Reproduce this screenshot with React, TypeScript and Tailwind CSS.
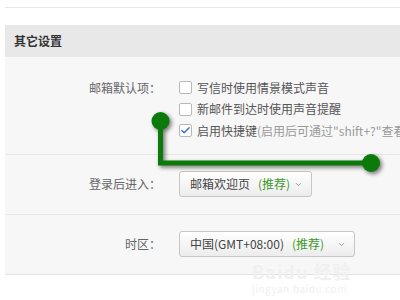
import { ChevronDown, Check } from "lucide-react"

const font = { fontFamily: '"Noto Sans CJK SC", "Noto Sans", sans-serif' }

function Box({ checked }: { checked?: boolean }) {
  return (
    <span className="flex h-[13px] w-[13px] shrink-0 items-center justify-center rounded-[2px] border border-[#b8b8b8] bg-white">
      {checked ? <Check className="h-[11px] w-[11px] text-[#2f6fc4]" strokeWidth={3} /> : null}
    </span>
  )
}

function Select({ label, width }: { label: string; width: string }) {
  return (
    <div
      className={`flex h-[26px] ${width} items-center rounded-[3px] border border-[#c6c6c6] bg-gradient-to-b from-white to-[#ececec] pl-[10px] pr-[8px] text-[12px] text-[#444]`}
    >
      <span>{label}</span>
      <span className="ml-[8px] text-[#3d9a2a]">(推荐)</span>
      <ChevronDown className="ml-auto h-[9px] w-[9px] text-[#888]" strokeWidth={2} />
    </div>
  )
}

export default function App() {
  return (
    <div className="relative h-[300px] w-[400px] overflow-hidden bg-white leading-none" style={font}>
      <div className="ml-[5px] h-[8px] border-b border-[#e6e6e6] bg-white" />

      <section className="ml-[5px] mt-[17px]">
        <div className="flex h-[32px] items-center bg-[#e8e8e8] pl-[9px] text-[12px] font-bold text-[#333]">
          其它设置
        </div>

        <div className="bg-[#f7f7f7]">
          <div className="flex border-b border-[#e6e6e6] pb-[12px] pt-[20px]">
            <div className="flex h-[21.5px] w-[156px] shrink-0 items-center justify-end text-[12px] text-[#666]">
              邮箱默认项：
            </div>
            <div className="ml-[18px] flex min-w-0 flex-col text-[12px] text-[#555]">
              <div className="flex h-[21.5px] items-center gap-[5px] whitespace-nowrap">
                <Box />
                写信时使用情景模式声音
              </div>
              <div className="flex h-[21.5px] items-center gap-[5px] whitespace-nowrap">
                <Box />
                新邮件到达时使用声音提醒
              </div>
              <div className="flex h-[21.5px] items-center gap-[5px] whitespace-nowrap">
                <Box checked />
                <span>
                  启用快捷键<span className="text-[#999]">(启用后可通过"shift+?"查看</span>
                </span>
              </div>
            </div>
          </div>

          <div className="flex h-[60px] items-center border-b border-[#e6e6e6]">
            <div className="w-[156px] shrink-0 text-right text-[12px] text-[#666]">登录后进入：</div>
            <div className="ml-[18px]">
              <Select label="邮箱欢迎页" width="w-[133px]" />
            </div>
          </div>

          <div className="flex h-[60px] items-center border-b border-[#e2e2e2]">
            <div className="w-[156px] shrink-0 text-right text-[12px] text-[#666]">时区：</div>
            <div className="ml-[18px]">
              <Select label="中国(GMT+08:00)" width="w-[176px]" />
            </div>
          </div>
        </div>
      </section>

      <div className="pointer-events-none absolute left-[252px] top-[262px] select-none text-[#f0f0f0]">
        <div className="text-[18px] font-bold tracking-[1px]">Baidu 经验</div>
        <div className="mt-[4px] text-[10px] tracking-[0.5px]">jingyan.baidu.com</div>
      </div>

      <svg
        className="pointer-events-none absolute left-0 top-0"
        width="400"
        height="300"
        viewBox="0 0 400 300"
        style={{ filter: "drop-shadow(2px 2px 2px rgba(0,0,0,0.55))" }}
      >
        <path d="M160.5 121 V163 H371" fill="none" stroke="#0b7a0b" strokeWidth="5" />
        <circle cx="160.5" cy="121" r="9" fill="#0b7a0b" />
        <circle cx="371" cy="163" r="9" fill="#0b7a0b" />
      </svg>
    </div>
  )
}
